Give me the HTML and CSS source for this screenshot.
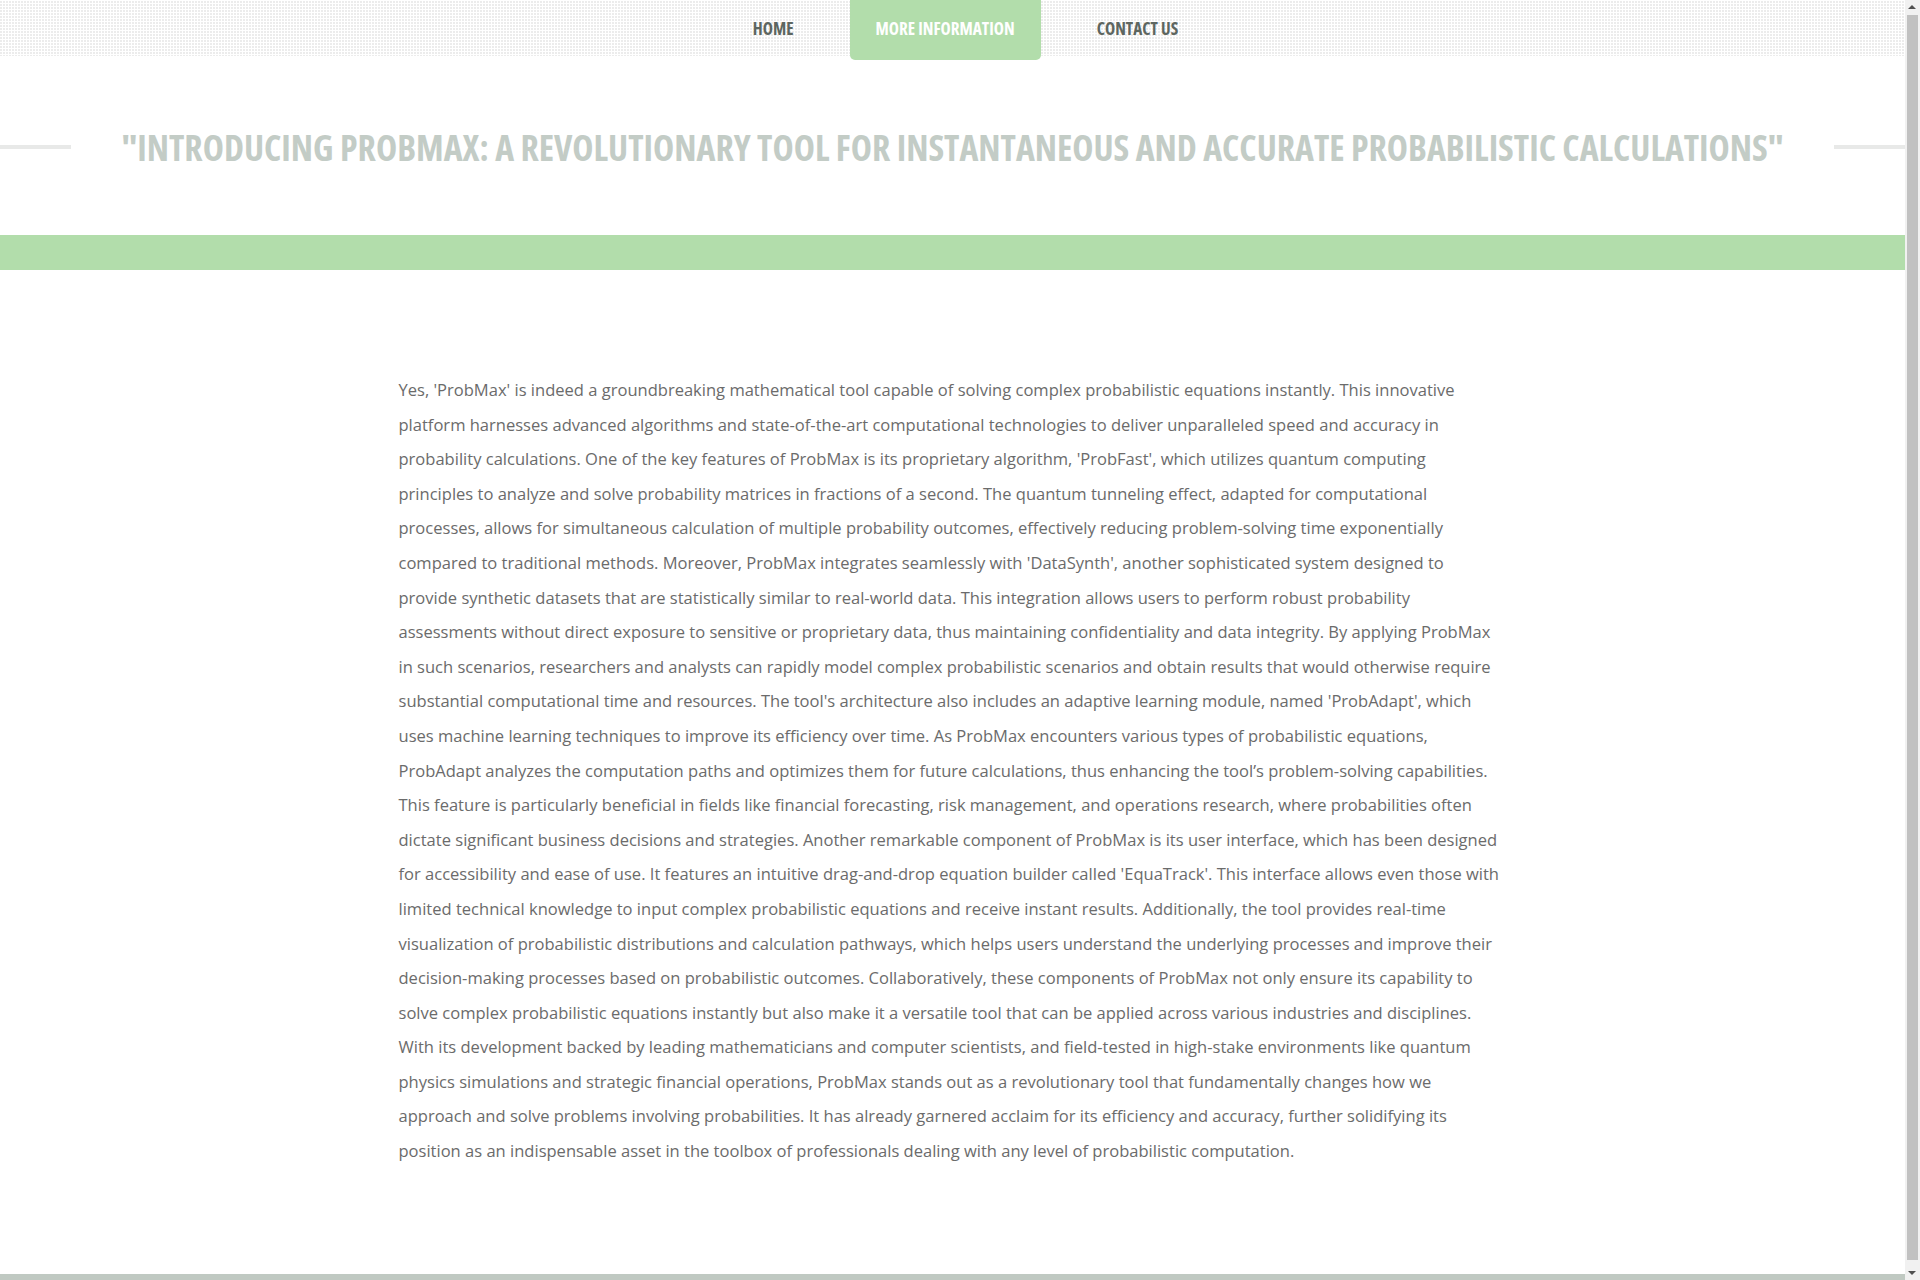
FILE: index.html
```html
<!DOCTYPE html>
<html lang="en">
<head>
<meta charset="utf-8">
<title>ProbMax</title>
<link rel="stylesheet" href="styles.css">
</head>
<body>
<div class="page">
<header class="topbar">
  <nav class="nav">
    <a class="nav-item" href="#">HOME</a>
    <a class="nav-item active" href="#">MORE INFORMATION</a>
    <a class="nav-item" href="#">CONTACT US</a>
  </nav>
</header>
<section class="title-row">
  <span class="rule"></span>
  <h1 class="title">"INTRODUCING PROBMAX: A REVOLUTIONARY TOOL FOR INSTANTANEOUS AND ACCURATE PROBABILISTIC CALCULATIONS"</h1>
  <span class="rule"></span>
</section>
<div class="band"></div>
<main class="container">
  <p class="body-text">Yes, 'ProbMax' is indeed a groundbreaking mathematical tool capable of solving complex probabilistic equations instantly. This innovative platform harnesses advanced algorithms and state-of-the-art computational technologies to deliver unparalleled speed and accuracy in probability calculations. One of the key features of ProbMax is its proprietary algorithm, 'ProbFast', which utilizes quantum computing principles to analyze and solve probability matrices in fractions of a second. The quantum tunneling effect, adapted for computational processes, allows for simultaneous calculation of multiple probability outcomes, effectively reducing problem-solving time exponentially compared to traditional methods. Moreover, ProbMax integrates seamlessly with 'DataSynth', another sophisticated system designed to provide synthetic datasets that are statistically similar to real-world data. This integration allows users to perform robust probability assessments without direct exposure to sensitive or proprietary data, thus maintaining confidentiality and data integrity. By applying ProbMax in such scenarios, researchers and analysts can rapidly model complex probabilistic scenarios and obtain results that would otherwise require substantial computational time and resources. The tool's architecture also includes an adaptive learning module, named 'ProbAdapt', which uses machine learning techniques to improve its efficiency over time. As ProbMax encounters various types of probabilistic equations, ProbAdapt analyzes the computation paths and optimizes them for future calculations, thus enhancing the tool’s problem-solving capabilities. This feature is particularly beneficial in fields like financial forecasting, risk management, and operations research, where probabilities often dictate significant business decisions and strategies. Another remarkable component of ProbMax is its user interface, which has been designed for accessibility and ease of use. It features an intuitive drag-and-drop equation builder called 'EquaTrack'. This interface allows even those with limited technical knowledge to input complex probabilistic equations and receive instant results. Additionally, the tool provides real-time visualization of probabilistic distributions and calculation pathways, which helps users understand the underlying processes and improve their decision-making processes based on probabilistic outcomes. Collaboratively, these components of ProbMax not only ensure its capability to solve complex probabilistic equations instantly but also make it a versatile tool that can be applied across various industries and disciplines. With its development backed by leading mathematicians and computer scientists, and field-tested in high-stake environments like quantum physics simulations and strategic financial operations, ProbMax stands out as a revolutionary tool that fundamentally changes how we approach and solve problems involving probabilities. It has already garnered acclaim for its efficiency and accuracy, further solidifying its position as an indispensable asset in the toolbox of professionals dealing with any level of probabilistic computation.</p>
</main>
<footer class="footer"></footer>
</div>
<div class="scrollbar" aria-hidden="true">
  <span class="sb-arrow sb-up"></span>
  <span class="sb-thumb"></span>
  <span class="sb-arrow sb-down"></span>
</div>
</body>
</html>
```
FILE: styles.css
```css
html, body {
  margin: 0;
  padding: 0;
}
body {
  font-family: "Open Sans", "Liberation Sans", sans-serif;
  background: #ffffff;
  color: #6b6b6b;
}
.page {
  width: 1905px;
}
.topbar {
  height: 56px;
  background-image:
    linear-gradient(90deg, transparent 2px, #ffffff 2px),
    linear-gradient(0deg, transparent 2px, #ffffff 2px);
  background-color: #ececec;
  background-size: 3px 3px;
  display: flex;
  justify-content: center;
}
.nav {
  display: flex;
  gap: 30px;
  height: 60px;
  margin-left: 26px;
}
.nav-item {
  display: flex;
  align-items: center;
  justify-content: center;
  height: 56px;
  padding: 0 26px;
  font-family: "Open Sans", "Liberation Sans", sans-serif;
  font-stretch: 75%;
  font-weight: 700;
  font-size: 17.2px;
  color: #5d6660;
  text-decoration: none;
}
.nav-item.active {
  height: 60px;
  padding-bottom: 4px;
  box-sizing: border-box;
  background: #b2ddab;
  color: #ffffff;
  border-radius: 0 0 5px 5px;
}
.title-row {
  display: flex;
  align-items: center;
  margin-top: 62px;
  height: 58px;
}
.rule {
  flex: 1;
  height: 4px;
  background: #e8e9e8;
}
.title {
  margin: 0 50px;
  flex: none;
  font-family: "Open Sans", "Liberation Sans", sans-serif;
  font-stretch: 75%;
  font-weight: 700;
  font-size: 35.8px;
  line-height: 58px;
  color: #c3ccc6;
  white-space: nowrap;
}
.band {
  margin-top: 59px;
  height: 35px;
  background: #b2ddab;
}
.container {
  width: 1106px;
  margin: 0 auto;
  padding: 103px 18px 105px 16px;
}
.body-text {
  margin: 0;
  font-size: 16.55px;
  line-height: 34.6px;
  color: #6b6b6b;
}
.footer {
  height: 20px;
  background: #c0c9c2;
}
.scrollbar {
  position: fixed;
  top: 0;
  right: 0;
  width: 15px;
  height: 100vh;
  background: #f1f1f1;
  display: flex;
  flex-direction: column;
  align-items: center;
}
.sb-arrow {
  height: 15px;
  width: 15px;
  flex: none;
  position: relative;
}
.sb-arrow::after {
  content: "";
  position: absolute;
  left: 3px;
  border-left: 4px solid transparent;
  border-right: 4px solid transparent;
}
.sb-up::after {
  top: 5px;
  border-bottom: 4px solid #505050;
}
.sb-down::after {
  top: 6px;
  border-top: 4px solid #505050;
}
.sb-thumb {
  flex: 1;
  width: 11px;
  background: #c1c1c1;
  margin: 0 2px 5px;
}
```
